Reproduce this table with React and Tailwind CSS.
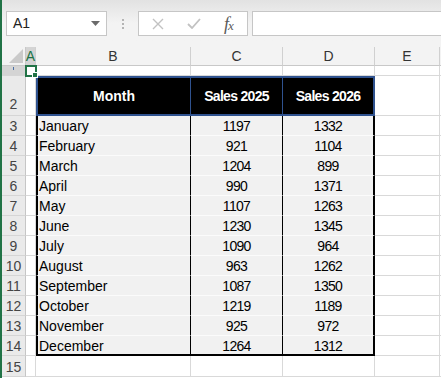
import React from 'react';

const rows = [
  ['January', 1197, 1332],
  ['February', 921, 1104],
  ['March', 1204, 899],
  ['April', 990, 1371],
  ['May', 1107, 1263],
  ['June', 1230, 1345],
  ['July', 1090, 964],
  ['August', 963, 1262],
  ['September', 1087, 1350],
  ['October', 1219, 1189],
  ['November', 925, 972],
  ['December', 1264, 1312],
];

const grid = 'border-r border-b border-[#d9d9d9]';

function RowHead({ n, h = 'h-[20px]' }) {
  return (
    <div className={`w-[24px] ${h} shrink-0 bg-[#eaeaea] border-r border-b border-r-[#c6c6c6] border-b-[#d5d5d5] flex items-center justify-center pt-[2px] text-[14px] text-[#444]`}>
      {n}
    </div>
  );
}

function Toolbar() {
  return (
    <div className="h-[47px] bg-gradient-to-b from-[#e2e2e2] via-[#f3f3f3] to-[#f3f3f3] flex items-start pt-[11px] pl-[4px]">
      <div className="w-[101px] h-[25px] bg-white border border-[#c6c6c6] flex items-center justify-between pl-[6px] pr-[6px] text-[14px] text-[#222]">
        <span>A1</span>
        <svg width="9" height="5" viewBox="0 0 9 5"><path d="M0 0h9L4.5 5z" fill="#6b6b6b" /></svg>
      </div>
      <div className="w-[31px] h-[25px] flex flex-col items-center justify-center gap-[2px]">
        <span className="w-[2px] h-[2px] bg-[#b4b4b4]" />
        <span className="w-[2px] h-[2px] bg-[#b4b4b4]" />
        <span className="w-[2px] h-[2px] bg-[#b4b4b4]" />
      </div>
      <div className="w-[110px] h-[25px] bg-white border border-[#c6c6c6] flex items-center">
        <div className="w-[38px] flex justify-center">
          <svg width="12" height="12" viewBox="0 0 12 12"><path d="M1 1l10 10M11 1L1 11" stroke="#c2c2c2" strokeWidth="1.4" /></svg>
        </div>
        <div className="w-[34px] flex justify-center">
          <svg width="14" height="11" viewBox="0 0 14 11"><path d="M1 6l4 4 8-9" stroke="#c2c2c2" strokeWidth="1.8" fill="none" /></svg>
        </div>
        <div className="w-[36px] flex justify-center items-center text-[18px] leading-none italic text-[#5a5a5a] font-['Liberation_Serif',serif]">
          f<span className="text-[13px] -ml-[1px] mt-[4px]">x</span>
        </div>
      </div>
      <div className="ml-[4px] flex-1 h-[25px] bg-white border border-r-0 border-[#c6c6c6]" />
    </div>
  );
}

function ColHeader() {
  const head = 'h-[19px] shrink-0 border-r border-b border-r-[#d0d0d0] border-b-[#c8c8c8] flex items-center justify-center text-[14px] text-[#333]';
  return (
    <div className="flex bg-[#f3f3f3]">
      <div className="w-[24px] h-[19px] shrink-0 border-r border-b border-[#c8c8c8] flex items-end justify-end pr-[2px] pb-[2px]">
        <svg width="14" height="14" viewBox="0 0 14 14"><path d="M14 0V14H0z" fill="#cacaca" /></svg>
      </div>
      <div className={`w-[10px] ${head} bg-[#d4d4d4] text-[#217346]`}>A</div>
      <div className={`w-[155px] ${head}`}>B</div>
      <div className={`w-[92px] ${head}`}>C</div>
      <div className={`w-[92px] ${head}`}>D</div>
      <div className={`w-[65px] ${head}`}>E</div>
      <div className="flex-1 h-[19px] border-b border-[#c8c8c8]" />
    </div>
  );
}

export default function App() {
  return (
    <div className="w-[441px] h-[378px] overflow-hidden flex bg-white font-['Liberation_Sans',Arial,sans-serif]">
      <div className="w-[2px] shrink-0 bg-[#217346]" />
      <div className="flex-1 flex flex-col">
        <Toolbar />
        <ColHeader />

        {/* row 1 */}
        <div className="flex h-[10px]">
          <div className="w-[24px] h-[10px] shrink-0 bg-[#d4d4d4] border-r border-b border-r-[#c6c6c6] border-b-[#d5d5d5] flex justify-center overflow-hidden">
            <span className="w-[1px] h-[3px] mt-[1px] bg-[#4a6fa5]" />
          </div>
          <div className={`relative w-[10px] h-[10px] shrink-0 ${grid}`}>
            <div className="absolute -left-[1px] -top-[1px] w-[12px] h-[12px] border-2 border-[#217346]" />
            <div className="absolute -right-[3px] -bottom-[3px] w-[6px] h-[6px] bg-[#217346] border border-white" />
          </div>
          <div className={`w-[155px] h-[10px] shrink-0 ${grid}`} />
          <div className={`w-[92px] h-[10px] shrink-0 ${grid}`} />
          <div className={`w-[92px] h-[10px] shrink-0 ${grid}`} />
          <div className={`w-[65px] h-[10px] shrink-0 ${grid}`} />
          <div className="flex-1 h-[10px] border-b border-[#d9d9d9]" />
        </div>

        {/* row 2: table header */}
        <div className="flex h-[40px]">
          <div className="w-[24px] h-[40px] shrink-0 bg-[#eaeaea] border-r border-b border-r-[#c6c6c6] border-b-[#d5d5d5] flex items-end justify-center text-[14px] text-[#444]">2</div>
          <div className={`w-[10px] h-[40px] shrink-0 ${grid}`} />
          <div className="w-[155px] h-[40px] shrink-0 bg-black border-2 border-r border-[#2f528f] flex items-center justify-center pt-[1px] text-[14px] font-bold text-white">Month</div>
          <div className="w-[92px] h-[40px] shrink-0 bg-black border-y-2 border-r border-[#2f528f] flex items-center justify-center pt-[1px] text-[14px] font-bold text-white tracking-[-0.7px]">Sales 2025</div>
          <div className="w-[92px] h-[40px] shrink-0 bg-black border-y-2 border-r-2 border-[#2f528f] flex items-center justify-center pt-[1px] text-[14px] font-bold text-white tracking-[-0.7px]">Sales 2026</div>
          <div className={`w-[65px] h-[40px] shrink-0 ${grid}`} />
          <div className="flex-1 h-[40px] border-b border-[#d9d9d9]" />
        </div>

        {rows.map(([month, a, b], i) => {
          const last = i === rows.length - 1;
          return (
            <div key={month} className="flex h-[20px]">
              <RowHead n={i + 3} />
              <div className={`w-[10px] h-[20px] shrink-0 ${grid}`} />
              <div className={`w-[155px] h-[20px] shrink-0 bg-[#f1f1f1] border-l-2 border-r border-l-black border-r-black flex items-center pl-[1px] pt-[2px] text-[14px] text-black ${last ? 'border-b-2 border-b-black' : 'border-b border-b-[#fbfbfb]'}`}>
                {month}
              </div>
              <div className={`w-[92px] h-[20px] shrink-0 bg-[#f1f1f1] border-r border-r-black flex items-center justify-center pt-[2px] text-[14px] text-black tracking-[-0.7px] ${last ? 'border-b-2 border-b-black' : 'border-b border-b-[#fbfbfb]'}`}>
                {a}
              </div>
              <div className={`w-[92px] h-[20px] shrink-0 bg-[#f1f1f1] border-r-2 border-r-black flex items-center justify-center pt-[2px] text-[14px] text-black tracking-[-0.7px] ${last ? 'border-b-2 border-b-black' : 'border-b border-b-[#fbfbfb]'}`}>
                {b}
              </div>
              <div className={`w-[65px] h-[20px] shrink-0 ${grid}`} />
              <div className="flex-1 h-[20px] border-b border-[#d9d9d9]" />
            </div>
          );
        })}

        {/* row 15 */}
        <div className="flex h-[21px]">
          <RowHead n={15} h="h-[21px]" />
          <div className={`w-[10px] h-[21px] shrink-0 ${grid}`} />
          <div className={`w-[155px] h-[21px] shrink-0 ${grid}`} />
          <div className={`w-[92px] h-[21px] shrink-0 ${grid}`} />
          <div className={`w-[92px] h-[21px] shrink-0 ${grid}`} />
          <div className={`w-[65px] h-[21px] shrink-0 ${grid}`} />
          <div className="flex-1 h-[21px] border-b border-[#d9d9d9]" />
        </div>
      </div>
    </div>
  );
}
